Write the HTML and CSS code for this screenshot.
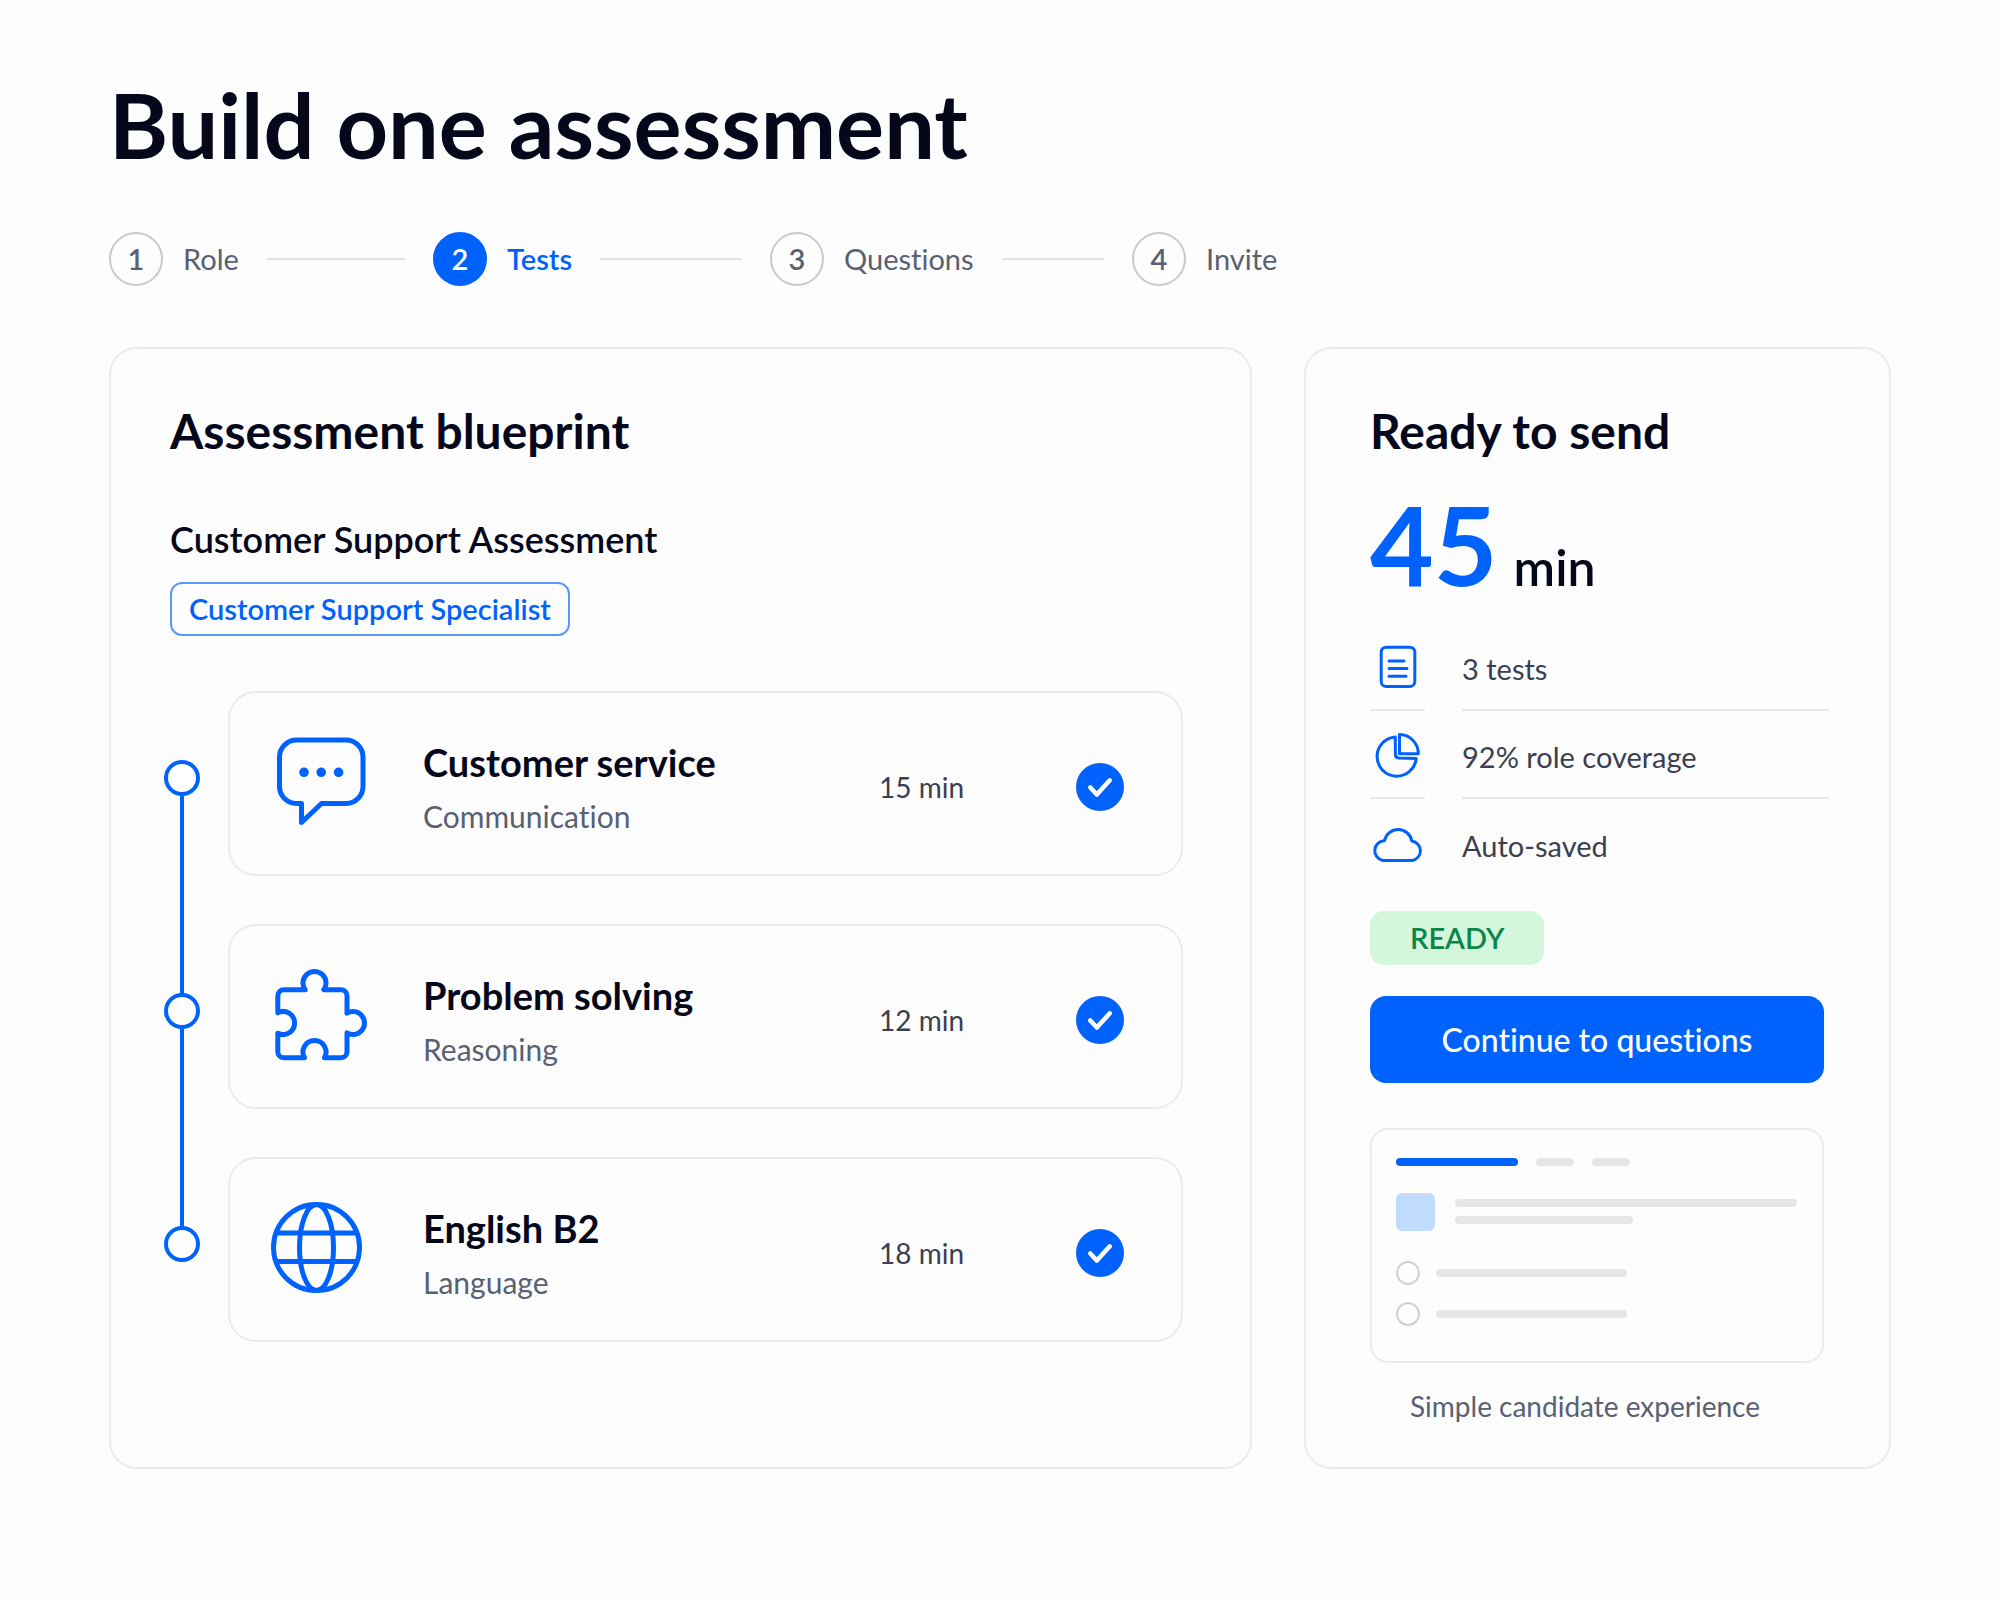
FILE: index.html
```html
<!DOCTYPE html>
<html lang="en">
<head>
<meta charset="utf-8">
<meta name="viewport" content="width=device-width, initial-scale=1">
<title>Build one assessment</title>
<link rel="stylesheet" href="styles.css">
</head>
<body>
<main class="page">
  <h1 class="page-title">Build one assessment</h1>

  <ol class="steps">
    <li class="step"><span class="step-number">1</span><span>Role</span></li>
    <li class="step step-current" aria-current="step"><span class="step-number">2</span><span>Tests</span></li>
    <li class="step"><span class="step-number">3</span><span>Questions</span></li>
    <li class="step"><span class="step-number">4</span><span>Invite</span></li>
  </ol>

  <div class="columns">
    <section class="panel blueprint">
      <h2 class="panel-title">Assessment blueprint</h2>
      <h3 class="assessment-name">Customer Support Assessment</h3>
      <span class="role-chip">Customer Support Specialist</span>

      <ol class="tests">
        <li class="test">
          <span class="test-node"></span>
          <article class="test-card">
            <svg class="test-icon" viewBox="0 0 92 92" aria-hidden="true">
              <path d="M21.5 67.5H26.5V86.5L46.5 67.5H71A17 17 0 0 0 88 50.5V21A17 17 0 0 0 71 4H21.5A17 17 0 0 0 4.5 21V50.5A17 17 0 0 0 21.5 67.5Z"/>
              <g class="dots"><circle cx="29" cy="36.3" r="4.8"/><circle cx="46.2" cy="36.3" r="4.8"/><circle cx="63.6" cy="36.3" r="4.8"/></g>
            </svg>
            <div class="test-text">
              <h4 class="test-name">Customer service</h4>
              <p class="test-kind">Communication</p>
            </div>
            <span class="test-time">15 min</span>
            <svg class="check" viewBox="0 0 48 48" role="img" aria-label="Included"><circle cx="24" cy="24" r="24"/><path d="M14.3 24.5L20.8 31.6L33.8 17.3"/></svg>
          </article>
        </li>
        <li class="test">
          <span class="test-node"></span>
          <article class="test-card">
            <svg class="test-icon" viewBox="0 0 92 92" aria-hidden="true">
              <path d="M8.8 20.7H30.2A11.5 11.5 0 1 1 48.8 20.7H66A6 6 0 0 1 72 26.7V44.2A11.5 11.5 0 1 1 72 63.8V82.7A6 6 0 0 1 66 88.7H49.5A11.5 11.5 0 1 0 29.5 88.7H8.8A6 6 0 0 1 2.8 82.7V64.2A11.5 11.5 0 1 0 2.8 43.8V26.7A6 6 0 0 1 8.8 20.7Z"/>
            </svg>
            <div class="test-text">
              <h4 class="test-name">Problem solving</h4>
              <p class="test-kind">Reasoning</p>
            </div>
            <span class="test-time">12 min</span>
            <svg class="check" viewBox="0 0 48 48" role="img" aria-label="Included"><circle cx="24" cy="24" r="24"/><path d="M14.3 24.5L20.8 31.6L33.8 17.3"/></svg>
          </article>
        </li>
        <li class="test">
          <span class="test-node"></span>
          <article class="test-card">
            <svg class="test-icon" viewBox="0 0 92 92" aria-hidden="true">
              <circle cx="41.5" cy="45.5" r="43"/>
              <ellipse cx="41.5" cy="45.5" rx="17" ry="43"/>
              <path d="M1.5 31H81.5M1.5 59.5H81.5"/>
            </svg>
            <div class="test-text">
              <h4 class="test-name">English B2</h4>
              <p class="test-kind">Language</p>
            </div>
            <span class="test-time">18 min</span>
            <svg class="check" viewBox="0 0 48 48" role="img" aria-label="Included"><circle cx="24" cy="24" r="24"/><path d="M14.3 24.5L20.8 31.6L33.8 17.3"/></svg>
          </article>
        </li>
      </ol>
    </section>

    <aside class="panel summary">
      <h2 class="panel-title">Ready to send</h2>
      <p class="duration"><strong class="duration-value">45</strong> <span class="duration-unit">min</span></p>

      <ul class="facts">
        <li class="fact">
          <span class="fact-icon"><svg viewBox="0 0 55 48" aria-hidden="true"><rect x="11.2" y="4.2" width="33.6" height="39.2" rx="5"/><path d="M19 18H34M19 25.6H37M19 33.3H36"/></svg></span>
          <span class="fact-text">3 tests</span>
        </li>
        <li class="fact">
          <span class="fact-icon"><svg viewBox="0 0 55 48" aria-hidden="true"><path d="M25.3 6A19.6 19.6 0 1 0 46.2 27.5L28.5 27Q25.5 26.8 25.4 23.5Z"/><path d="M29.5 3.6V22.7H48.3A19 19 0 0 0 29.5 3.6Z"/></svg></span>
          <span class="fact-text">92% role coverage</span>
        </li>
        <li class="fact">
          <span class="fact-icon"><svg viewBox="0 0 55 48" aria-hidden="true"><path d="M12.8 40.5A10 10 0 0 1 14.5 20.7A13.9 13.9 0 0 1 41.8 20.9A9.9 9.9 0 0 1 42 40.5Z"/></svg></span>
          <span class="fact-text">Auto-saved</span>
        </li>
      </ul>

      <span class="status">READY</span>
      <button class="continue" type="button">Continue to questions</button>

      <figure class="preview">
        <div class="preview-screen" aria-hidden="true">
          <div class="preview-tabs"><i class="bar bar-active"></i><i class="bar bar-tab"></i><i class="bar bar-tab"></i></div>
          <div class="preview-question"><i class="preview-thumb"></i><div class="preview-lines"><i class="bar"></i><i class="bar bar-half"></i></div></div>
          <div class="preview-option"><i class="preview-dot"></i><i class="bar bar-option"></i></div>
          <div class="preview-option"><i class="preview-dot"></i><i class="bar bar-option"></i></div>
        </div>
        <figcaption class="preview-caption">Simple candidate experience</figcaption>
      </figure>
    </aside>
  </div>
</main>
</body>
</html>
```
FILE: styles.css
```css
:root {
  --blue: #0062fd;
  --ink: #05081a;
  --text: #3a404f;
  --muted: #596072;
  --line: #e9ebec;
  --bar: #e6e6e6;
  --page: #fdfdfe;
}

* { box-sizing: border-box; }

body {
  margin: 0;
  background: var(--page);
  color: var(--ink);
  font-family: Lato, "Liberation Sans", sans-serif;
  font-size: 29px;
  font-variant-ligatures: none;
  line-height: 36px;
}

h1, h2, h3, h4, p, ol, ul, figure { margin: 0; padding: 0; }
ol, ul { list-style: none; }
svg { display: block; }

.page { padding: 72px 109px 132px; }

.page-title {
  font-size: 90px;
  font-weight: 700;
  line-height: 104px;
}

/* Step indicator */
.steps {
  display: grid;
  grid-template-columns: 324px 337px 362px auto;
  justify-content: start;
  margin-top: 56px;
  color: var(--muted);
}

.step {
  display: flex;
  align-items: center;
}

.step:not(:last-child)::after {
  content: "";
  flex: 1;
  height: 2px;
  margin: 0 28px;
  background: #e0e2e4;
}

.step-number {
  display: grid;
  place-items: center;
  width: 54px;
  height: 54px;
  margin-right: 20px;
  border: 2px solid #c8c9cc;
  border-radius: 50%;
  font-weight: 600;
}

.step-current { color: var(--blue); font-weight: 600; }

.step-current .step-number {
  border-color: var(--blue);
  background: var(--blue);
  color: #fff;
}

/* Panels */
.columns {
  display: grid;
  grid-template-columns: 1143fr 587fr;
  gap: 52px;
  margin-top: 61px;
}

.panel {
  border: 2px solid var(--line);
  border-radius: 28px;
}

.blueprint { padding: 54px 67px 123px 59px; }
.summary { padding: 54px 65px 43px 64px; }

.panel-title {
  font-size: 48px;
  font-weight: 700;
  line-height: 56px;
}

.assessment-name {
  margin-top: 58px;
  font-size: 36px;
  font-weight: 600;
  line-height: 44px;
}

.role-chip {
  display: inline-block;
  margin-top: 21px;
  padding: 7px 17px;
  border: 2px solid #5c97fa;
  border-radius: 12px;
  color: var(--blue);
  font-weight: 600;
  vertical-align: top;
}

/* Test timeline */
.tests {
  display: grid;
  gap: 48px;
  margin: 55px 0 0 -6px;
}

.test {
  position: relative;
  display: grid;
  grid-template-columns: 36px 1fr;
  column-gap: 28px;
}

.test:not(:last-child)::before {
  content: "";
  position: absolute;
  top: 87px;
  bottom: -135px;
  left: 16px;
  width: 4px;
  background: var(--blue);
}

.test-node {
  position: relative;
  z-index: 1;
  width: 36px;
  height: 36px;
  margin-top: 69px;
  border: 4px solid var(--blue);
  border-radius: 50%;
  background: #fff;
}

.test-card {
  display: grid;
  grid-template-columns: 148px 1fr 197px 48px;
  align-items: center;
  min-height: 185px;
  padding: 7px 57px 0 45px;
  border: 2px solid var(--line);
  border-radius: 28px;
}

.test-icon {
  width: 92px;
  height: 92px;
  margin-bottom: 10px;
  overflow: visible;
  fill: none;
  stroke: var(--blue);
  stroke-width: 5;
  stroke-linejoin: round;
}

.dots { fill: var(--blue); stroke: none; }

.test-name {
  font-size: 38px;
  font-weight: 700;
  line-height: 44px;
}

.test-kind {
  margin-top: 14px;
  color: var(--muted);
  font-size: 30px;
}

.test-time { color: var(--text); font-size: 28px; }

.check { width: 48px; height: 48px; fill: var(--blue); }

.check path {
  fill: none;
  stroke: #fff;
  stroke-width: 4.5;
  stroke-linecap: round;
  stroke-linejoin: round;
}

/* Summary */
.duration {
  display: flex;
  align-items: baseline;
  gap: 16px;
  margin-top: 30px;
}

.duration-value {
  color: var(--blue);
  font-size: 110px;
  font-weight: 700;
  line-height: 108px;
}

.duration-unit {
  font-size: 50px;
  font-weight: 600;
  line-height: 50px;
}

.facts {
  margin: 26px -5px 0 0;
  color: var(--text);
}

.fact {
  display: grid;
  grid-template-columns: 55px 1fr;
  column-gap: 37px;
  height: 88px;
}

.fact > * {
  display: flex;
  align-items: center;
  padding-top: 5px;
  border-bottom: 2px solid #e7e9ea;
}

.fact:last-child > * { border-bottom: 0; }
.fact > .fact-icon { padding-top: 1px; }

.fact-icon svg {
  width: 55px;
  height: 48px;
  fill: none;
  stroke: var(--blue);
  stroke-width: 3;
  stroke-linecap: round;
  stroke-linejoin: round;
}

.status {
  display: block;
  width: fit-content;
  margin-top: 24px;
  padding: 9px 40px;
  border-radius: 14px;
  background: #d4f7dc;
  color: #0b8549;
  font-weight: 600;
}

.continue {
  display: block;
  width: 100%;
  margin-top: 31px;
  padding: 25px;
  border: 0;
  border-radius: 16px;
  background: var(--blue);
  color: #fff;
  font-family: inherit;
  font-size: 32px;
  font-weight: 500;
  font-variant-ligatures: none;
  line-height: 37px;
  cursor: pointer;
}

/* Candidate preview */
.preview { margin-top: 45px; }

.preview-screen {
  padding: 28px 25px 35px 24px;
  border: 2px solid var(--line);
  border-radius: 18px;
}

.bar {
  display: block;
  height: 8px;
  border-radius: 4px;
  background: var(--bar);
}

.preview-tabs { display: flex; gap: 18px; }
.bar-active { width: 122px; background: var(--blue); }
.bar-tab { width: 38px; }

.preview-question {
  display: flex;
  gap: 20px;
  margin: 27px 0 30px;
}

.preview-thumb {
  width: 39px;
  height: 38px;
  border-radius: 6px;
  background: #bfdbfd;
}

.preview-lines {
  flex: 1;
  display: grid;
  gap: 9px;
  align-content: start;
  padding-top: 6px;
}

.bar-half { width: 178px; }

.preview-option {
  display: flex;
  align-items: center;
  gap: 16px;
}

.preview-option + .preview-option { margin-top: 17px; }

.preview-dot {
  width: 24px;
  height: 24px;
  border: 2px solid #d0d1d3;
  border-radius: 50%;
}

.bar-option { width: 191px; }

.preview-caption {
  margin-top: 25px;
  padding-right: 24px;
  color: var(--muted);
  font-size: 28px;
  text-align: center;
}
```
